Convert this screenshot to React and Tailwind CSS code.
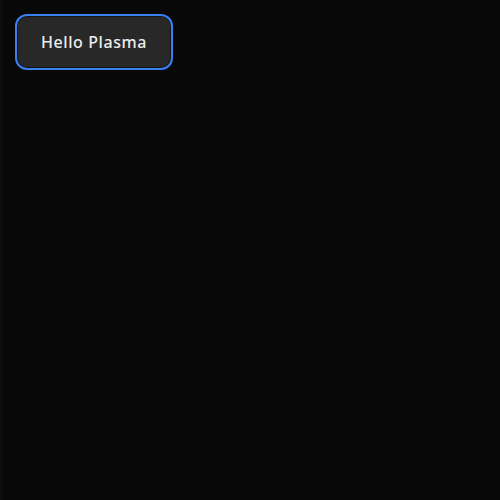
import React from 'react';

export default function App() {
  return (
    <div className="w-[500px] h-[500px] bg-[#080808] border-l-2 border-[#0e0e0e] pt-[14px] pl-[13px]">
      <button
        type="button"
        className="w-[158px] h-[56px] rounded-[12px] border-2 border-[#3a7ff0] bg-[#282828] shadow-[inset_0_0_0_1px_#141414] text-[#ececec] text-[16px] font-medium tracking-[0.6px] font-['Noto_Sans',sans-serif] flex items-center justify-center"
      >
        Hello Plasma
      </button>
    </div>
  );
}
